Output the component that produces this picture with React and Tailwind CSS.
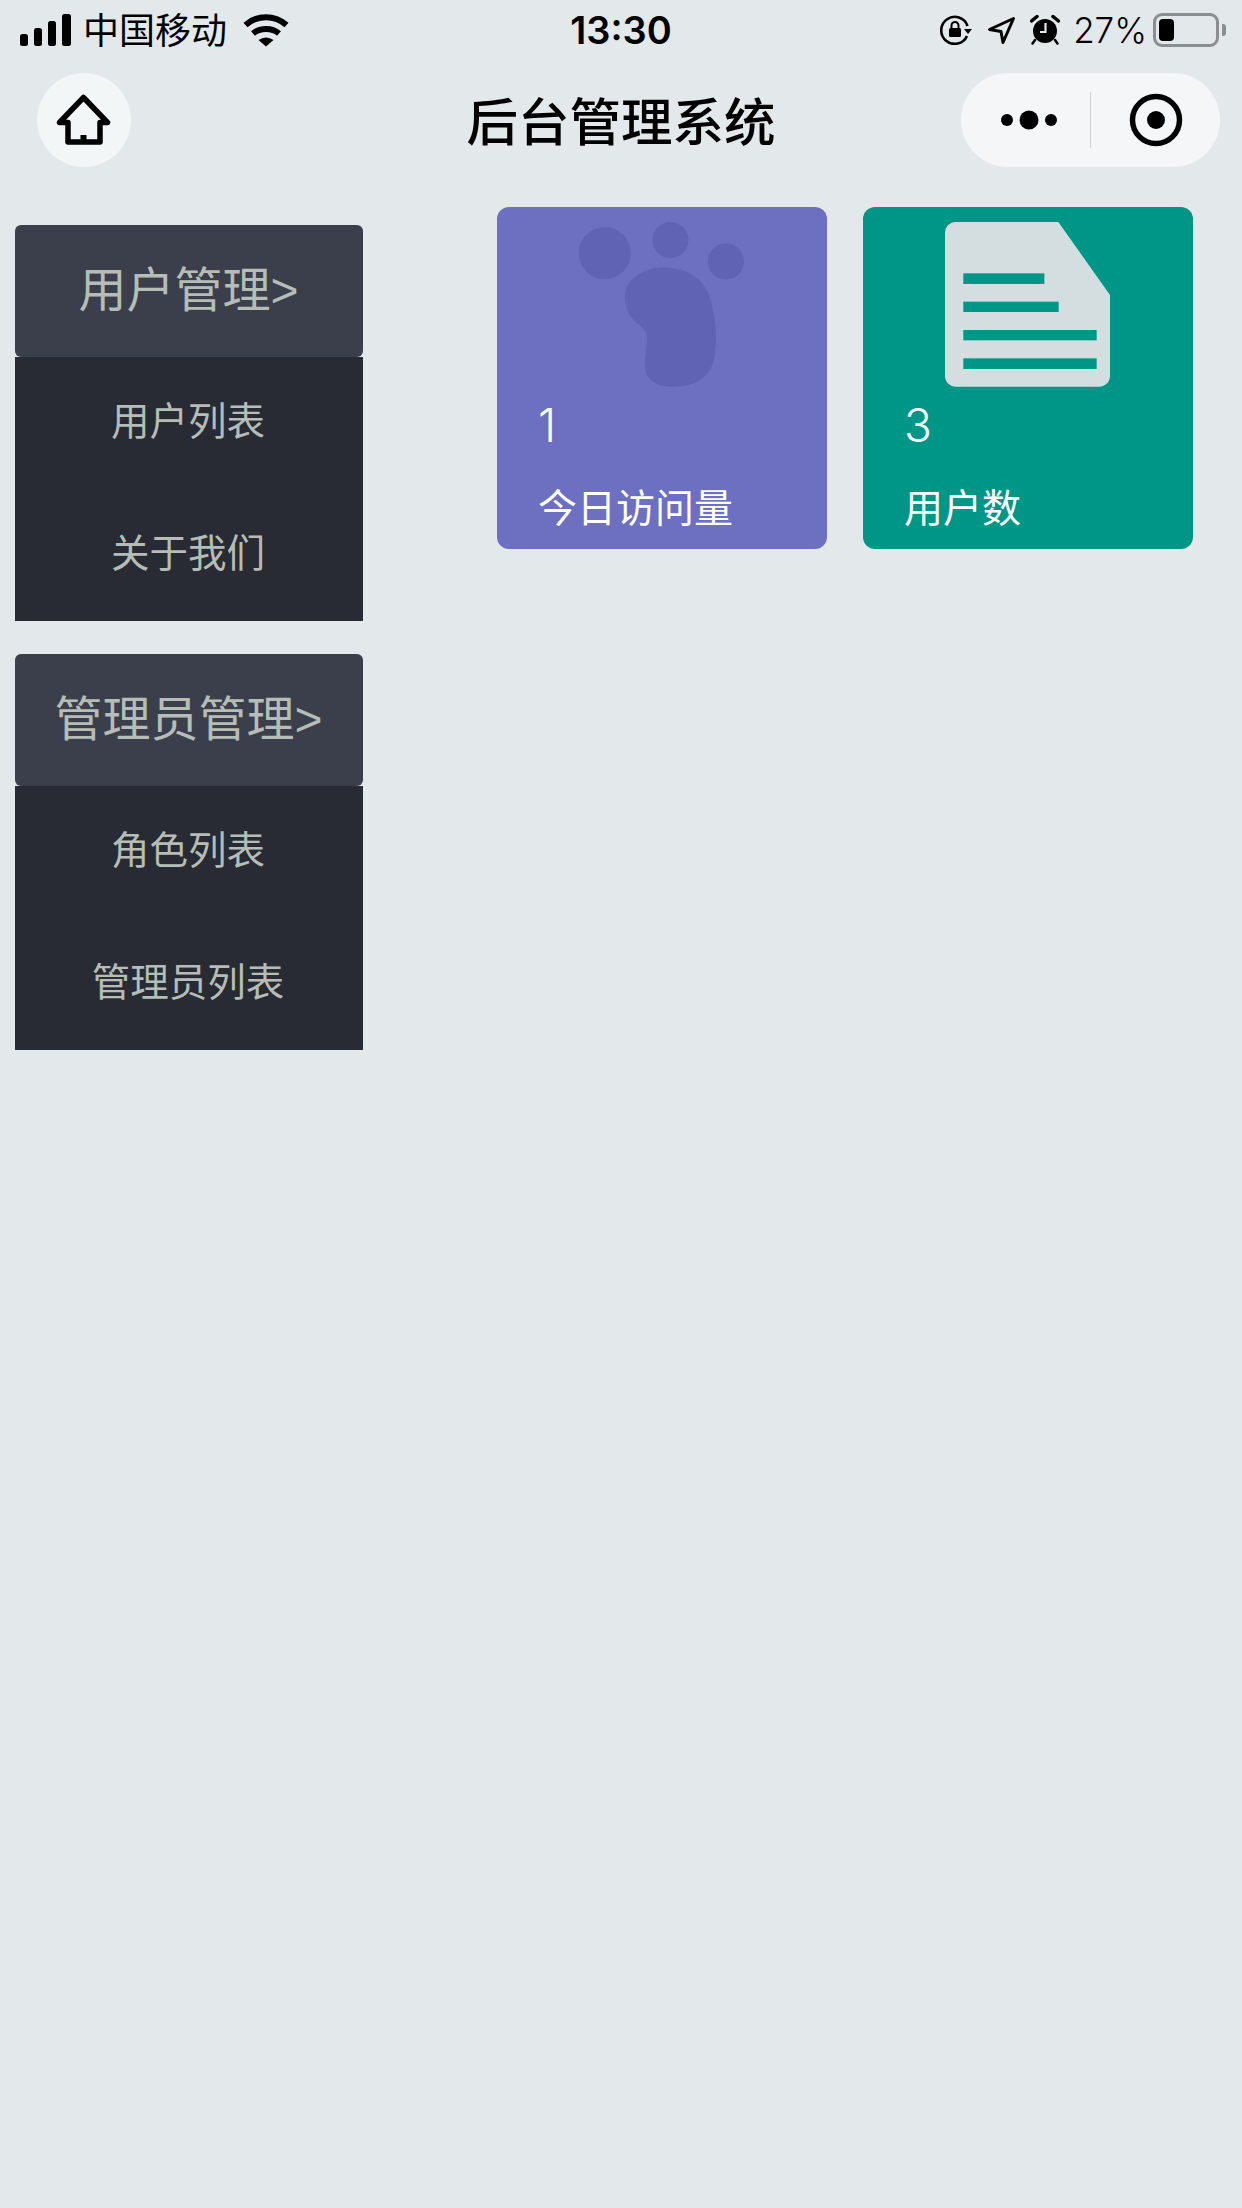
import React from 'react';

const cjk = "font-['Liberation_Sans','Noto_Sans_CJK_SC',sans-serif]";

const menus = [
    { title: '用户管理>', items: ['用户列表', '关于我们'] },
    { title: '管理员管理>', items: ['角色列表', '管理员列表'] },
];

function SignalIcon() {
    return (
        <svg width="52" height="32" viewBox="0 0 52 32" className="block">
            <rect x="0" y="20" width="8" height="12" rx="2.5" fill="#000" />
            <rect x="14" y="14" width="8" height="18" rx="2.5" fill="#000" />
            <rect x="28" y="7" width="8" height="25" rx="2.5" fill="#000" />
            <rect x="42" y="0" width="9" height="32" rx="2.5" fill="#000" />
        </svg>
    );
}

function WifiIcon() {
    return (
        <svg width="46" height="34" viewBox="0 0 46 34" className="block">
            <path d="M2.5 12 C14 1.5 32 1.5 43.5 12" fill="none" stroke="#000" strokeWidth="6" />
            <path d="M10 20.5 C17 14.5 29 14.5 36 20.5" fill="none" stroke="#000" strokeWidth="6" />
            <path d="M15.5 27 Q23 22 30.5 27 L23 33.5 Z" fill="#000" />
        </svg>
    );
}

function RotationLockIcon() {
    return (
        <svg width="33" height="30" viewBox="0 0 33 30" className="block">
            <path d="M27.5 11 A13.5 13.5 0 1 0 27 21" fill="none" stroke="#000" strokeWidth="2.6" />
            <path d="M24 14 H32 L28 19 Z" fill="#000" />
            <rect x="9" y="13" width="12" height="9" rx="1.5" fill="#000" />
            <path d="M11.5 13 V10.5 A3.5 3.5 0 0 1 18.5 10.5 V13" fill="none" stroke="#000" strokeWidth="2" />
        </svg>
    );
}

function LocationIcon() {
    return (
        <svg width="29" height="29" viewBox="0 0 29 29" className="block">
            <path d="M26.5 2.5 L2.5 13.5 L14 15.5 L16 26.5 Z" fill="none" stroke="#000" strokeWidth="3" strokeLinejoin="round" />
        </svg>
    );
}

function AlarmIcon() {
    return (
        <svg width="30" height="30" viewBox="0 0 30 30" className="block">
            <circle cx="15" cy="16" r="12" fill="#000" />
            <path d="M1.5 6 L7 1.5 M28.5 6 L23 1.5" stroke="#000" strokeWidth="3.5" strokeLinecap="round" />
            <path d="M5 25 L2.5 28.5 M25 25 L27.5 28.5" stroke="#000" strokeWidth="2.5" strokeLinecap="round" />
            <path d="M15.5 8 V17 H10" fill="none" stroke="#e3e8eb" strokeWidth="2.2" />
        </svg>
    );
}

function HomeIcon() {
    return (
        <svg width="94" height="94" viewBox="0 0 94 94" className="block">
            <path d="M22.5 49.5 L46.5 24.5 L70.5 49.5 H63 V69 H31 V49.5 Z" fill="none" stroke="#000" strokeWidth="5.5" strokeLinejoin="round" />
            <rect x="43.5" y="62" width="6" height="6" fill="#000" />
        </svg>
    );
}

function FootIcon() {
    return (
        <svg viewBox="298 97 493 493" className="block w-[165px] h-[165px] mx-auto -translate-x-px">
            <g fill="#6063b3">
                <circle cx="375" cy="190" r="78" />
                <circle cx="571" cy="151" r="54" />
                <circle cx="737" cy="215" r="54" />
                <path d="M435 320 C437 265 495 233 550 233 C615 233 665 258 688 320 C708 375 712 460 702 505 C690 565 640 590 575 590 C525 590 493 565 495 520 C496 480 507 450 497 425 C485 398 437 395 435 320 Z" />
            </g>
        </svg>
    );
}

function DocIcon() {
    return (
        <svg viewBox="285 96 495 495" className="block w-[165px] h-[165px] mx-auto -translate-x-px">
            <path d="M318 96 H625 L780 315 V558 A32 32 0 0 1 748 590 H318 A32 32 0 0 1 285 558 V128 A32 32 0 0 1 318 96 Z" fill="#d4dde0" />
            <rect x="340" y="250" width="243" height="32" fill="#009687" />
            <rect x="340" y="335" width="286" height="31" fill="#009687" />
            <rect x="340" y="420" width="400" height="31" fill="#009687" />
            <rect x="340" y="505" width="400" height="32" fill="#009687" />
        </svg>
    );
}

function StatCard({ bg, icon, value, label }) {
    return (
        <div className={`w-[330px] h-[342px] rounded-[12px] pt-[15px] pl-[41px] ${bg}`}>
            <div className="-ml-[41px]">{icon}</div>
            <div className="mt-[15px] h-[46px] leading-[46px] text-[46px] font-light font-['Inter',sans-serif] text-white">{value}</div>
            <div className={`mt-[38px] text-[39px] leading-[46px] font-normal text-white ${cjk}`}>{label}</div>
        </div>
    );
}

export default function App() {
    return (
        <div className={`min-h-[2208px] bg-[#e3e8eb] ${cjk}`}>
            {/* Status bar */}
            <div className="h-[60px] px-[20px] grid grid-cols-[1fr_auto_1fr] items-center">
                <div className="flex items-center">
                    <SignalIcon />
                    <span className="ml-[11px] mt-[3px] text-[36px] leading-[44px] text-black font-normal">中国移动</span>
                    <span className="ml-[16px]"><WifiIcon /></span>
                </div>
                <div className="text-[38px] leading-[44px] font-semibold text-black font-['Inter',sans-serif]">13:30</div>
                <div className="flex items-center justify-end -mr-[4px]">
                    <RotationLockIcon />
                    <span className="ml-[14px]"><LocationIcon /></span>
                    <span className="ml-[14px]"><AlarmIcon /></span>
                    <span className="ml-[13px] text-[35px] leading-[44px] font-light text-black font-['Inter',sans-serif]">27%</span>
                    <div className="ml-[6px] flex items-center">
                        <div className="w-[66px] h-[34px] rounded-[9px] border-[3px] border-[#8a8e90] p-[3px]">
                            <div className="w-[15px] h-full rounded-[4px] bg-black" />
                        </div>
                        <div className="ml-[3px] w-[4px] h-[12px] rounded-r-[3px] bg-[#8a8e90]" />
                    </div>
                </div>
            </div>

            {/* Nav bar */}
            <div className="mt-[13px] h-[94px] grid grid-cols-[1fr_auto_1fr] items-center">
                <div className="ml-[37px] w-[94px] h-[94px] rounded-full bg-[#f3f6f7]">
                    <HomeIcon />
                </div>
                <div className="pt-[6px] text-[51.5px] leading-[60px] font-medium text-black">后台管理系统</div>
                <div className="justify-self-end mr-[22px] w-[259px] h-[94px] rounded-[47px] bg-[#f4f6f8] flex items-center">
                    <div className="w-[129px] flex items-center justify-center pl-[14px]">
                        <svg width="64" height="20" viewBox="0 0 64 20" className="block">
                            <circle cx="6" cy="10" r="6" fill="#000" />
                            <circle cx="28" cy="10" r="9.5" fill="#000" />
                            <circle cx="50" cy="10" r="6" fill="#000" />
                        </svg>
                    </div>
                    <div className="w-px h-[56px] bg-[#cdcfd1]" />
                    <div className="flex-1 flex items-center justify-center">
                        <svg width="54" height="54" viewBox="0 0 54 54" className="block">
                            <circle cx="27" cy="27" r="23.5" fill="none" stroke="#000" strokeWidth="5.5" />
                            <circle cx="27" cy="27" r="9" fill="#000" />
                        </svg>
                    </div>
                </div>
            </div>

            <div className="flex items-start">
                {/* Sidebar */}
                <div className="ml-[15px] mt-[58px] w-[348px] flex flex-col gap-[33px]">
                    {menus.map(menu => (
                        <div key={menu.title}>
                            <div className="h-[132px] rounded-[6px] bg-[#3b3e4b] flex items-center justify-center pr-[1px] text-[48px] font-normal text-[#b5bdb6]">
                                {menu.title}
                            </div>
                            <div className="bg-[#282b34]">
                                {menu.items.map(item => (
                                    <div key={item} className="h-[132px] flex items-center justify-center pr-[2px] pb-[2px] text-[38.5px] font-normal text-[#b5bdb6]">
                                        {item}
                                    </div>
                                ))}
                            </div>
                        </div>
                    ))}
                </div>

                {/* Stat cards */}
                <div className="ml-[134px] mt-[40px] flex gap-[36px]">
                    <StatCard bg="bg-[#6d6fc0]" icon={<FootIcon />} value="1" label="今日访问量" />
                    <StatCard bg="bg-[#009687]" icon={<DocIcon />} value="3" label="用户数" />
                </div>
            </div>
        </div>
    );
}
